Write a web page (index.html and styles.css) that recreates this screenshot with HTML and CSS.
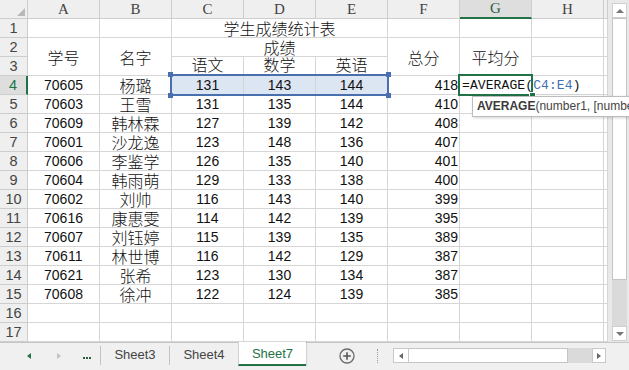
FILE: index.html
```html
<!DOCTYPE html>
<html lang="zh-CN">
<head>
  <meta charset="UTF-8" />
  <title>学生成绩统计表</title>
  <link rel="stylesheet" href="styles.css">
</head>
<body>
  <div class="app">
    <div class="main">
      <div class="sheet">
        <div class="grid" id="grid">
          <div class="hd corner"><span class="tri-corner"></span></div>
          <div class="hd">A</div>
          <div class="hd">B</div>
          <div class="hd">C</div>
          <div class="hd">D</div>
          <div class="hd">E</div>
          <div class="hd">F</div>
          <div class="hd on">G</div>
          <div class="hd">H</div>
          <div class="hd"></div>

          <div class="rh">1</div>
          <div></div>
          <div></div>
          <div class="c3 zh">学生成绩统计表</div>
          <div></div>
          <div></div>
          <div></div>
          <div></div>

          <div class="rh">2</div>
          <div class="r2 zh">学号</div>
          <div class="r2 zh">名字</div>
          <div class="c3 zh">成绩</div>
          <div class="r2 zh">总分</div>
          <div class="r2 zh">平均分</div>
          <div></div>
          <div></div>

          <div class="rh">3</div>
          <div class="zh low">语文</div>
          <div class="zh low">数学</div>
          <div class="zh low">英语</div>
          <div></div>
          <div></div>
        </div>

        <div class="range">
          <i class="hdl tl"></i><i class="hdl tr"></i><i class="hdl bl"></i><i class="hdl br"></i>
        </div>
        <div class="active"><i class="fill"></i></div>
        <div class="tip"><b>AVERAGE</b>(number1, [number2], ...)</div>
      </div>

      <div class="vscroll">
        <div class="vbtn"><span class="arr up"></span></div>
        <div class="vthumb"></div>
        <div class="vtrack"></div>
        <div class="vbtn"><span class="arr down"></span></div>
      </div>
    </div>

    <div class="tabbar">
      <div class="nav">
        <span class="arr prev"></span>
        <span class="arr next"></span>
        <span class="dots"><i></i><i></i><i></i></span>
      </div>
      <i class="sep"></i>
      <div class="tab">Sheet3</div>
      <i class="sep"></i>
      <div class="tab">Sheet4</div>
      <div class="tab current">Sheet7</div>
      <div class="add">
        <svg width="16" height="16" viewBox="0 0 16 16">
          <circle cx="8" cy="8" r="7" fill="none" stroke="#6b6b6b" stroke-width="1.3"/>
          <path d="M8 4.2v7.6M4.2 8h7.6" stroke="#555" stroke-width="1.6"/>
        </svg>
      </div>
      <i class="dotsep"></i>
      <div class="hscroll">
        <div class="hbtn"><span class="arr prev dark"></span></div>
        <div class="hthumb"></div>
        <div class="htrack"></div>
        <div class="hbtn"><span class="arr next dark"></span></div>
      </div>
    </div>
  </div>

  <script>
    const grid = document.getElementById('grid');

    const rows = [
      ['70605', '杨璐', 131, 143, 144, 418],
      ['70603', '王雪', 131, 135, 144, 410],
      ['70609', '韩林霖', 127, 139, 142, 408],
      ['70601', '沙龙逸', 123, 148, 136, 407],
      ['70606', '李鉴学', 126, 135, 140, 401],
      ['70604', '韩雨萌', 129, 133, 138, 400],
      ['70602', '刘帅', 116, 143, 140, 399],
      ['70616', '康惠雯', 114, 142, 139, 395],
      ['70607', '刘钰婷', 115, 139, 135, 389],
      ['70611', '林世博', 116, 142, 129, 387],
      ['70621', '张希', 123, 130, 134, 387],
      ['70608', '徐冲', 122, 124, 139, 385]
    ];

    function cell(text, cls) {
      const d = document.createElement('div');
      if (cls) d.className = cls;
      if (text !== undefined && text !== '') d.textContent = text;
      grid.appendChild(d);
      return d;
    }

    rows.forEach((r, i) => {
      const n = i + 4;
      const sel = n === 4 ? 'sel' : '';
      cell(n, n === 4 ? 'rh on' : 'rh');
      cell(r[0]);
      cell(r[1], 'zh');
      cell(r[2], sel);
      cell(r[3], sel);
      cell(r[4], sel);
      cell(r[5], 'num');
      if (n === 4) {
        const g = cell('', 'formula');
        g.innerHTML = '<span class="expr">=AVERAGE(<span class="ref">C4:E4</span>)</span>';
      } else {
        cell('');
      }
      cell('');
      cell('');
    });

    for (let n = 16; n <= 17; n++) {
      cell(n, 'rh');
      for (let k = 0; k < 9; k++) cell('');
    }
  </script>
</body>
</html>
```

FILE: styles.css
```css
html, body {
  margin: 0;
  padding: 0;
  height: 100%;
  overflow: hidden;
  background: #fff;
  font-family: "Liberation Sans", "Noto Sans CJK SC", sans-serif;
  color: #111;
}

.app {
  width: 629px;
  height: 370px;
  display: flex;
  flex-direction: column;
  overflow: hidden;
}

.main {
  display: flex;
  height: 342px;
}

.sheet {
  position: relative;
  width: 608px;
}

/* cells */
.grid {
  display: grid;
  grid-template-columns: 28px repeat(8, 72px) 4px;
  grid-template-rows: repeat(18, 19px);
}

.grid > div {
  box-sizing: border-box;
  border-right: 1px solid #d6d6d6;
  border-bottom: 1px solid #d6d6d6;
  display: flex;
  align-items: center;
  justify-content: center;
  font-size: 14px;
  white-space: nowrap;
  overflow: visible;
}

.grid .hd {
  background: #efefef;
  border-color: #cdcdcd;
  font-family: "Liberation Serif", serif;
  font-size: 15px;
  color: #444;
}

.grid .rh {
  background: #efefef;
  border-color: #cdcdcd;
  font-size: 14.5px;
  color: #444;
}

.grid .hd.on {
  background: #dedede;
  border-bottom: 2px solid #217346;
  color: #2b5b3e;
}

.grid .rh.on {
  background: #dedede;
  border-right: 2px solid #217346;
  color: #217346;
}

.tri-corner {
  width: 0;
  height: 0;
  border-left: 8px solid transparent;
  border-bottom: 8px solid #b9b9b9;
  margin: 6px -14px 0 0;
}

.grid .zh {
  font-size: 16px;
  font-weight: 300;
}

.grid .low {
  align-items: flex-end;
  line-height: 18px;
}

.c3 {
  grid-column: span 3;
}

.r2 {
  grid-row: span 2;
}

.grid .num {
  justify-content: flex-end;
  padding-right: 1px;
}

.grid .sel {
  background: #dce6f2;
}

.grid .formula {
  justify-content: flex-start;
  padding-left: 2px;
}

.expr {
  flex: none;
  font-family: "Liberation Mono", monospace;
  font-size: 13px;
  letter-spacing: 0.1px;
}

.ref {
  color: #3f6fb6;
}

/* selection overlays */
.range {
  position: absolute;
  left: 170px;
  top: 74px;
  width: 219px;
  height: 22px;
  box-sizing: border-box;
  border: 2px solid #4a6fae;
}

.hdl {
  position: absolute;
  width: 5px;
  height: 5px;
  background: #4a6fae;
}

.hdl.tl { left: -4px; top: -4px; }
.hdl.tr { right: -4px; top: -4px; }
.hdl.bl { left: -4px; bottom: -4px; }
.hdl.br { right: -4px; bottom: -4px; }

.active {
  position: absolute;
  left: 458px;
  top: 74px;
  width: 75px;
  height: 22px;
  box-sizing: border-box;
  border: 2px solid #217346;
}

.fill {
  position: absolute;
  right: -5px;
  bottom: -5px;
  width: 5px;
  height: 5px;
  background: #217346;
  border: 1px solid #fff;
}

.tip {
  position: absolute;
  left: 472px;
  top: 96px;
  width: 160px;
  height: 21px;
  box-sizing: border-box;
  padding: 0 0 0 4px;
  border: 1px solid #bdbdbd;
  background: #fff;
  box-shadow: 1px 1px 3px rgba(0, 0, 0, 0.18);
  font-size: 12px;
  line-height: 19px;
  color: #444;
  white-space: nowrap;
  overflow: hidden;
  z-index: 10;
}

.tip b {
  color: #3a3a3a;
}

/* vertical scrollbar */
.vscroll {
  width: 21px;
  box-sizing: border-box;
  background: #e9e9e9;
  padding: 3px 2px 1px 4px;
  display: flex;
  flex-direction: column;
}

.vbtn {
  height: 15px;
  box-sizing: border-box;
  background: #fff;
  border: 1px solid #cfcfcf;
  display: flex;
  align-items: center;
  justify-content: center;
}

.vthumb {
  height: 262px;
  box-sizing: border-box;
  background: #fff;
  border: 1px solid #c4c4c4;
}

.vtrack {
  flex: 1;
  background: #dadada;
}

.arr {
  width: 0;
  height: 0;
  display: block;
}

.arr.up {
  border-left: 4px solid transparent;
  border-right: 4px solid transparent;
  border-bottom: 4px solid #777;
}

.arr.down {
  border-left: 4px solid transparent;
  border-right: 4px solid transparent;
  border-top: 4px solid #777;
}

.arr.prev {
  border-top: 3.5px solid transparent;
  border-bottom: 3.5px solid transparent;
  border-right: 4px solid #217346;
}

.arr.next {
  border-top: 3.5px solid transparent;
  border-bottom: 3.5px solid transparent;
  border-left: 4px solid #c2c2c2;
}

.arr.prev.dark {
  border-right-color: #666;
}

.arr.next.dark {
  border-left-color: #666;
}

/* sheet tabs */
.tabbar {
  height: 28px;
  box-sizing: border-box;
  background: #f0f0f0;
  border-top: 1px solid #c6c6c6;
  display: flex;
  align-items: flex-start;
  font-size: 13px;
  color: #444;
}

.nav {
  width: 100px;
  height: 26px;
  box-sizing: border-box;
  padding-left: 27px;
  display: flex;
  align-items: center;
}

.nav .next {
  margin-left: 26px;
}

.dots {
  margin-left: 22px;
  margin-top: 4px;
  display: flex;
  gap: 1px;
}

.dots i {
  width: 2px;
  height: 2px;
  background: #2d5e40;
}

.sep {
  width: 1px;
  height: 19px;
  margin-top: 3px;
  background: #c4c4c4;
}

.tab {
  width: 68px;
  height: 24px;
  line-height: 24px;
  text-align: center;
}

.tab + .tab {
  width: 69px;
}

.tab.current {
  width: 68px;
  height: 24px;
  margin-top: -1px;
  line-height: 24px;
  box-sizing: border-box;
  background: #fff;
  color: #217346;
  border-left: 1px solid #d0d0d0;
  border-bottom: 2px solid #217346;
  box-shadow: 1px 0 1px rgba(0, 0, 0, 0.12);
}

.add {
  margin-left: 33px;
  height: 26px;
  display: flex;
  align-items: center;
}

.dotsep {
  width: 0;
  height: 14px;
  margin: 6px 0 0 22px;
  border-left: 1px dotted #9a9a9a;
}

.hscroll {
  width: 213px;
  height: 15px;
  margin: 5px 0 0 15px;
  display: flex;
}

.hbtn {
  width: 16px;
  box-sizing: border-box;
  background: #fff;
  border: 1px solid #c8c8c8;
  display: flex;
  align-items: center;
  justify-content: center;
}

.hbtn + .hthumb + .htrack + .hbtn {
  width: 14px;
}

.hthumb {
  width: 159px;
  box-sizing: border-box;
  background: #fff;
  border: 1px solid #c4c4c4;
  border-left: none;
}

.htrack {
  flex: 1;
  background: #dadada;
}
```
